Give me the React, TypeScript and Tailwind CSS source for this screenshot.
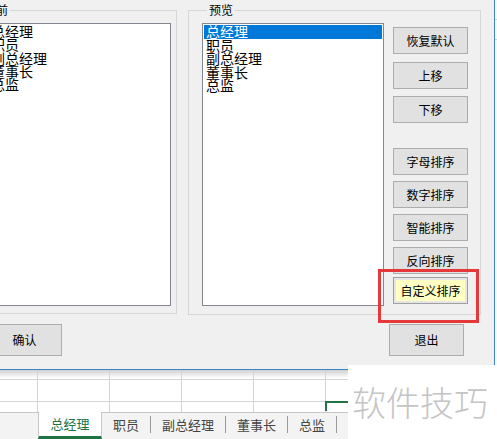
import React from "react";

const items = ["总经理", "职员", "副总经理", "董事长", "总监"];
const sheetTabs = ["总经理", "职员", "副总经理", "董事长", "总监"];

function ListBox({ highlight }: { highlight: boolean }) {
  return (
    <div className="h-[283px] w-full border border-[#828790] bg-white p-[1px] text-[14px] leading-[13.3px] text-black">
      {items.map((it, i) => (
        <div
          key={it}
          className={
            i === 0 && highlight
              ? "h-[14px] bg-[#0078d7] pl-[2px] text-white"
              : "h-[13.3px] pl-[2px]"
          }
        >
          {it}
        </div>
      ))}
    </div>
  );
}

function Btn({ label, className = "" }: { label: string; className?: string }) {
  return (
    <button
      className={`flex h-[27px] w-[75px] items-center justify-center border border-[#adadad] bg-[#e1e1e1] text-[12px] text-black ${className}`}
    >
      {label}
    </button>
  );
}

export default function App() {
  return (
    <div className="relative h-[439px] w-[497px] overflow-hidden bg-white font-['Noto_Sans_CJK_SC',sans-serif]">
      {/* dialog + sheet strip */}
      <div className="flex h-[370px]">
        <div className="-ml-[40px] flex h-[370px] w-[535px] shrink-0 flex-col border-r border-b border-[#3d86c6] bg-[#f0f0f0]">
          <div className="flex gap-[11px] pt-[3px]">
            {/* left group */}
            <fieldset className="h-[311px] w-[217px] border border-[#d6d6d6] pl-[26px] pr-[5px]">
              <legend className="-ml-[17px] px-[2px] text-[12px] leading-[14px] text-black">调整前</legend>
              <div className="mt-[6px]">
                <ListBox highlight={false} />
              </div>
            </fieldset>

            {/* right group */}
            <fieldset className="h-[312px] w-[293px] border border-[#d6d6d6] pl-[13px] pr-[11px]">
              <legend className="ml-[5px] px-[2px] text-[12px] leading-[14px] text-black">预览</legend>
              <div className="mt-[6px] flex gap-[9px]">
                <div className="w-[182px]">
                  <ListBox highlight={true} />
                </div>
                <div className="flex flex-col">
                  <Btn label="恢复默认" className="mt-[4px]" />
                  <Btn label="上移" className="mt-[8px]" />
                  <Btn label="下移" className="mt-[7px]" />
                  <Btn label="字母排序" className="mt-[25px]" />
                  <Btn label="数字排序" className="mt-[6px]" />
                  <Btn label="智能排序" className="mt-[6px]" />
                  <Btn label="反向排序" className="mt-[6px]" />
                  <button className="mt-[3px] h-[27px] w-[75px] border border-[#a0a0a0] bg-[#e6e6e6] p-[2px]">
                    <div className="flex h-full w-full items-center justify-center bg-[#ffffc4] text-[12px] text-black">
                      自定义排序
                    </div>
                  </button>
                </div>
              </div>
            </fieldset>
          </div>

          <div className="mt-[9px] flex justify-between pl-[27px] pr-[30px]">
            <Btn label="确认" className="!h-[32px]" />
            <Btn label="退出" className="!h-[32px]" />
          </div>
        </div>
        <div className="flex-1 bg-[#f7fafd]">
          <div className="h-[20px] border-b border-[#c9d6e2]" />
          <div className="h-[20px] border-b border-[#c9d6e2]" />
        </div>
      </div>

      {/* sheet grid */}
      <div className="h-[42px] bg-[linear-gradient(to_bottom,#d0d0d0,#ffffff_8px)]">
        <div className="flex h-full">
          {[38, 72, 72, 72, 72, 72, 72, 72].map((w, i) => (
            <div key={i} className="h-full shrink-0 border-r border-[#d4d4d4]" style={{ width: w }}>
              <div className="h-[10px] border-b border-[#d4d4d4]" />
              <div className="h-[22px] border-b border-[#d4d4d4]" />
              {i === 5 && <div className="h-[10px] border-t-2 border-l-2 border-[#217346] -ml-[1px] -mt-[1px]" />}
            </div>
          ))}
        </div>
      </div>

      {/* sheet tabs */}
      <div className="flex h-[27px] items-stretch border-t border-[#c6c6c6] bg-[#f3f3f3] text-[13px] leading-none">
        <div className="w-[38px] shrink-0" />
        {sheetTabs.map((t, i) =>
          i === 0 ? (
            <div
              key={t}
              className="-mt-[1px] flex w-[64px] shrink-0 items-center justify-center border-x border-[#c6c6c6] border-b-[3px] border-b-[#217346] bg-white pb-[1px] text-[#217346]"
            >
              {t}
            </div>
          ) : (
            <div key={t} className="flex shrink-0 items-center pb-[3px]">
              <span className="px-[11px] text-[#444444]">{t}</span>
              <span className="h-[17px] w-px bg-[#9a9a9a]" />
            </div>
          )
        )}
      </div>

      {/* annotation */}
      <div className="pointer-events-none absolute left-[378px] top-[269px] h-[54px] w-[101px] border-[3px] border-[#e5383b]" />

      {/* watermark */}
      <div className="absolute left-[348px] top-[365px] flex h-[74px] w-[149px] items-center bg-white pl-[4px]">
        <span className="text-[34px] font-light leading-none tracking-[0px] text-[#c4c4c4]">软件技巧</span>
      </div>
    </div>
  );
}
